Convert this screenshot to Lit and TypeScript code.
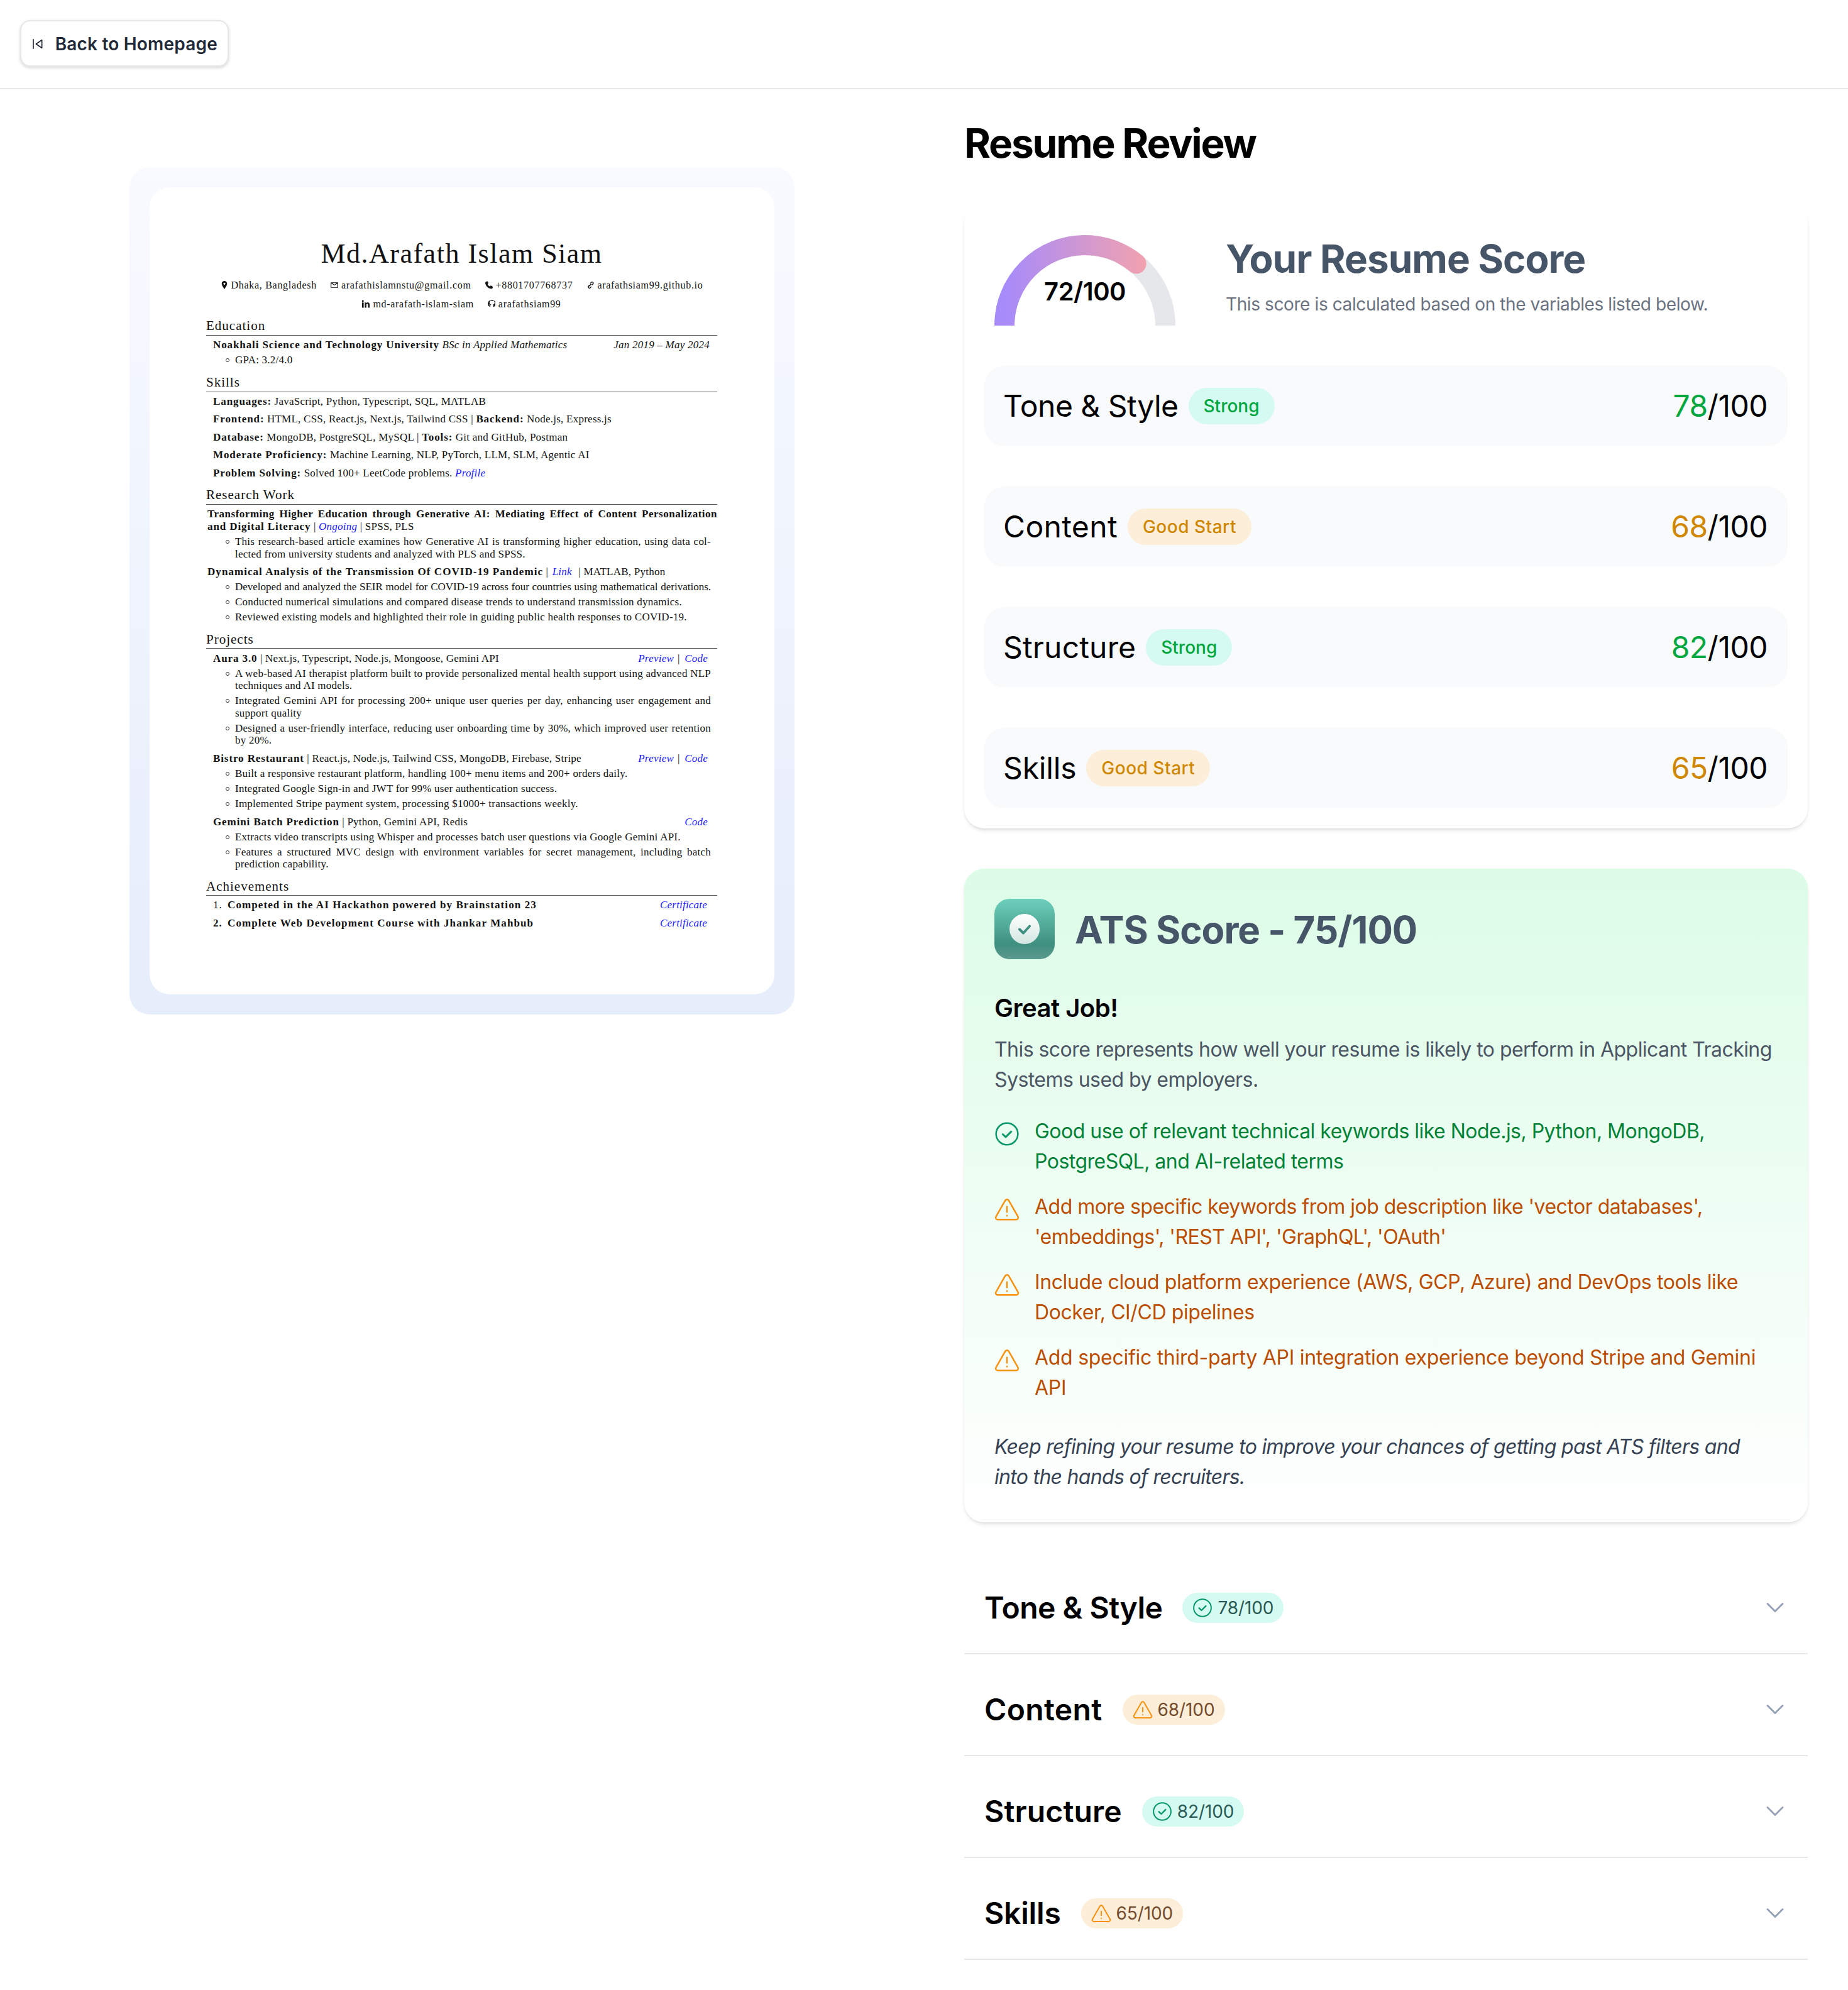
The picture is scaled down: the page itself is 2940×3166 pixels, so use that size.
import { LitElement, html, css, svg } from 'lit';
import { customElement } from 'lit/decorators.js';

const checkIcon = (size: number, color: string) => html`
  <svg width=${size} height=${size} viewBox="0 0 24 24" fill="none" stroke=${color} stroke-width="1.5" stroke-linecap="round" stroke-linejoin="round">
    <circle cx="12" cy="12" r="10.400"></circle>
    <path d="M8 12.300l2.800 2.700L16 9.800" stroke-width="1.8"></path>
  </svg>
`;

const warnIcon = (size: number, color: string) => html`
  <svg width=${size} height=${size} viewBox="0 0 24 24" fill="none" stroke=${color} stroke-width="1.5" stroke-linecap="round" stroke-linejoin="round">
    <path d="M10.300 3.500L1.500 19c-.7 1.300.2 2.800 1.700 2.800h17.600c1.500 0 2.400-1.500 1.700-2.800L13.700 3.500c-.8-1.300-2.600-1.300-3.400 0z"></path>
    <path d="M12 9.500v5"></path>
    <path d="M12 18v.1"></path>
  </svg>
`;

// track evens out the width difference of the substitute font per title
const scores = [
  { title: 'Tone & Style', score: 78, track: -0.5 },
  { title: 'Content', score: 68, track: 0.35 },
  { title: 'Structure', score: 82, track: 0.17 },
  { title: 'Skills', score: 65, track: -0.17 },
];

const tips = [
  { good: true, track: -0.52, text: 'Good use of relevant technical keywords like Node.js, Python, MongoDB, PostgreSQL, and AI-related terms' },
  { good: false, track: -0.52, text: "Add more specific keywords from job description like 'vector databases', 'embeddings', 'REST API', 'GraphQL', 'OAuth'" },
  { good: false, track: -0.4, text: 'Include cloud platform experience (AWS, GCP, Azure) and DevOps tools like Docker, CI/CD pipelines' },
  { good: false, track: -0.28, text: 'Add specific third-party API integration experience beyond Stripe and Gemini API' },
];

@customElement('resume-sheet')
export class ResumeSheet extends LitElement {
  static styles = css`
    :host {
      display: block;
      padding: 84.5px 91px 0 90px;
      height: 1284px;
      box-sizing: border-box;
      font-family: 'Liberation Serif', serif;
      font-size: 17px;
      line-height: 19.6px;
      letter-spacing: 0.24px;
      color: #111;
    }
    h1 {
      margin: 0;
      font-size: 44px;
      line-height: 42px;
      font-weight: 400;
      text-align: center;
      letter-spacing: 1.5px;
    }
    .contact {
      margin-top: 19.7px;
      display: flex;
      flex-wrap: wrap;
      justify-content: center;
      column-gap: 22px;
      row-gap: 5px;
      font-size: 16px;
      letter-spacing: 0.7px;
    }
    .contact span { display: inline-flex; align-items: center; gap: 5px; }
    .contact svg { width: 12px; height: 13px; fill: #111; }
    .break { flex-basis: 100%; height: 0; }
    h2 {
      margin: 0;
      font-size: 21px;
      line-height: 22px;
      font-weight: 400;
      letter-spacing: 1px;
      border-bottom: 1.5px solid #555;
      padding-bottom: 3.6px;
    }
    section { margin-top: 14px; }
    .entry { padding-left: 11px; padding-right: 12px; margin-top: 5.4px; display: flex; justify-content: space-between; }
    .entry.flat { padding-left: 2px; padding-right: 0; display: block; }
    .entry.flat.first { text-align-last: justify; }
    .entry.flat.first b { letter-spacing: 0.5px; }
    .entry.flat.next { margin-top: 0; }
    .entry.gap { margin-top: 9px; }
    .entry.flat.gap b { letter-spacing: 1.05px; }
    .entry.flat.gap a { margin: 0 6px 0 2px; }
    .entry a.solo, .links { margin-right: 3px; }
    .skills { padding-left: 11px; }
    .skills div { margin-top: 8.9px; }
    .skills div:first-child { margin-top: 5.4px; }
    ul { margin: 0; padding: 0 10px 0 46px; list-style: none; }
    li { margin-top: 4.4px; position: relative; }
    li::before {
      content: '';
      position: absolute;
      left: -15px;
      top: 7px;
      width: 6px;
      height: 6px;
      border: 1px solid #333;
      border-radius: 50%;
      box-sizing: border-box;
    }
    .full { display: block; text-align: justify; text-align-last: justify; }
    .full.tight { letter-spacing: 0; }
    b { font-weight: 700; letter-spacing: 0.9px; }
    a { color: #1a1aff; font-style: italic; text-decoration: none; }
    em { font-style: italic; }
    .links { white-space: nowrap; }
    .links a + a { margin-left: 3px; }
    .links a:first-child { margin-right: 6px; }
    ol { margin: 5px 0 0; padding: 0 16px 0 11px; list-style: none; font-weight: 700; letter-spacing: 1.1px; }
    ol li { display: flex; margin-top: 8.9px; }
    ol li::before { display: none; }
    ol li:first-child { margin-top: 0; }
    ol i { font-style: normal; width: 23px; flex: none; }
    ol i.light { font-weight: 400; }
    ol span { flex: 1; }
    ol a { font-weight: 400; letter-spacing: 0.2px; }
  `;

  render() {
    return html`
      <h1>Md.Arafath Islam Siam</h1>
      <div class="contact">
        <span><svg viewBox="0 0 12 14"><path d="M6 0a4.6 4.6 0 0 0-4.6 4.7C1.4 8 6 14 6 14s4.600-6 4.600-9.300A4.600 4.600 0 0 0 6 0zm0 6.400a1.700 1.700 0 1 1 0-3.400 1.700 1.700 0 0 1 0 3.400z"></path></svg>Dhaka, Bangladesh</span>
        <span><svg viewBox="0 0 14 14"><path d="M1 2h12a1 1 0 0 1 1 1v8a1 1 0 0 1-1 1H1a1 1 0 0 1-1-1V3a1 1 0 0 1 1-1zm.4 2v7h11.200V4L7 8 1.400 4zm1.400-.8L7 6.400l4.200-3.200H2.800z"></path></svg>arafathislamnstu@gmail.com</span>
        <span><svg viewBox="0 0 14 14"><path d="M3 0l2 .5.800 3.200L4.200 5.200c.7 1.700 2.400 3.500 4.200 4.400l1.600-1.600 3.200 1L14 12c-.5 1.300-1.600 2-3 2C5.400 13.500.500 8.600 0 3 0 1.600 1.500.400 3 0z"></path></svg>+8801707768737</span>
        <span><svg viewBox="0 0 14 14"><path d="M8.600 1.200a3 3 0 0 1 4.200 4.200L10.600 7.600 9.400 6.400l2.200-2.200a1.300 1.300 0 0 0-1.800-1.800L7.600 4.600 6.400 3.400zM5.400 6.400l1.200 1.200-2.200 2.200a1.300 1.300 0 0 0 1.800 1.800l2.200-2.200 1.200 1.200-2.200 2.200a3 3 0 0 1-4.200-4.200zM8.200 4.600l1.200 1.200-3.600 3.600-1.200-1.200z"></path></svg>arafathsiam99.github.io</span>
        <span class="break"></span>
        <span><svg viewBox="0 0 14 14"><path d="M0 4.500h3V14H0zM1.500 0a1.700 1.700 0 1 1 0 3.400 1.700 1.700 0 0 1 0-3.400zM5 4.500h2.800v1.300c.5-.9 1.600-1.500 2.900-1.500 2.500 0 3.300 1.500 3.300 4V14h-3V9c0-1.300-.3-2.200-1.500-2.200S8 7.700 8 9v5H5z"></path></svg>md-arafath-islam-siam</span>
        <span><svg viewBox="0 0 14 14"><path d="M7 0a6.500 6.500 0 0 0-2.200 12.700v-2.300c-.6 0-1.400-.2-1.800-1.300-.2-.5-.6-.9-1-1.200h1c.5 0 1 .5 1.300 1 .4.500 1 .6 1.500.4 0-.5.2-.9.500-1.200-1.900-.3-3-1.300-3-3.300 0-.9.300-1.600.8-2.200-.1-.6-.1-1.200.2-1.800.8 0 1.500.3 2.100.8a6 6 0 0 1 3.200 0c.6-.5 1.300-.8 2.100-.8.300.6.300 1.200.2 1.800.5.6.8 1.300.8 2.200 0 2-1.100 3-3 3.300.3.400.5.900.5 1.500v3.100A6.500 6.500 0 0 0 7 0z"></path></svg>arafathsiam99</span>
      </div>

      <section>
        <h2>Education</h2>
        <div class="entry"><span><b>Noakhali Science and Technology University</b> <em>BSc in Applied Mathematics</em></span><em>Jan 2019 – May 2024</em></div>
        <ul><li>GPA: 3.2/4.0</li></ul>
      </section>

      <section>
        <h2>Skills</h2>
        <div class="skills">
          <div><b>Languages:</b> JavaScript, Python, Typescript, SQL, MATLAB</div>
          <div><b>Frontend:</b> HTML, CSS, React.js, Next.js, Tailwind CSS | <b>Backend:</b> Node.js, Express.js</div>
          <div><b>Database:</b> MongoDB, PostgreSQL, MySQL | <b>Tools:</b> Git and GitHub, Postman</div>
          <div><b>Moderate Proficiency:</b> Machine Learning, NLP, PyTorch, LLM, SLM, Agentic AI</div>
          <div><b>Problem Solving:</b> Solved 100+ LeetCode problems. <a>Profile</a></div>
        </div>
      </section>

      <section>
        <h2>Research Work</h2>
        <div class="entry flat first"><b>Transforming Higher Education through Generative AI: Mediating Effect of Content Personalization</b></div>
        <div class="entry flat next"><b>and Digital Literacy</b> | <a>Ongoing</a> | SPSS, PLS</div>
        <ul>
          <li><span class="full">This research-based article examines how Generative AI is transforming higher education, using data col-</span>lected from university students and analyzed with PLS and SPSS.</li>
        </ul>
        <div class="entry flat gap"><b>Dynamical Analysis of the Transmission Of COVID-19 Pandemic</b> | <a>Link</a> | MATLAB, Python</div>
        <ul>
          <li><span class="full tight">Developed and analyzed the SEIR model for COVID-19 across four countries using mathematical derivations.</span></li>
          <li>Conducted numerical simulations and compared disease trends to understand transmission dynamics.</li>
          <li>Reviewed existing models and highlighted their role in guiding public health responses to COVID-19.</li>
        </ul>
      </section>

      <section>
        <h2>Projects</h2>
        <div class="entry"><span><b>Aura 3.0</b> | Next.js, Typescript, Node.js, Mongoose, Gemini API</span><span class="links"><a>Preview</a>| <a>Code</a></span></div>
        <ul>
          <li><span class="full">A web-based AI therapist platform built to provide personalized mental health support using advanced NLP</span>techniques and AI models.</li>
          <li><span class="full">Integrated Gemini API for processing 200+ unique user queries per day, enhancing user engagement and</span>support quality</li>
          <li><span class="full">Designed a user-friendly interface, reducing user onboarding time by 30%, which improved user retention</span>by 20%.</li>
        </ul>
        <div class="entry gap"><span><b>Bistro Restaurant</b> | React.js, Node.js, Tailwind CSS, MongoDB, Firebase, Stripe</span><span class="links"><a>Preview</a>| <a>Code</a></span></div>
        <ul>
          <li>Built a responsive restaurant platform, handling 100+ menu items and 200+ orders daily.</li>
          <li>Integrated Google Sign-in and JWT for 99% user authentication success.</li>
          <li>Implemented Stripe payment system, processing $1000+ transactions weekly.</li>
        </ul>
        <div class="entry gap"><span><b>Gemini Batch Prediction</b> | Python, Gemini API, Redis</span><a class="solo">Code</a></div>
        <ul>
          <li>Extracts video transcripts using Whisper and processes batch user questions via Google Gemini API.</li>
          <li><span class="full">Features a structured MVC design with environment variables for secret management, including batch</span>prediction capability.</li>
        </ul>
      </section>

      <section>
        <h2>Achievements</h2>
        <ol>
          <li><i class="light">1.</i><span>Competed in the AI Hackathon powered by Brainstation 23</span><a>Certificate</a></li>
          <li><i>2.</i><span>Complete Web Development Course with Jhankar Mahbub</span><a>Certificate</a></li>
        </ol>
      </section>
    `;
  }
}

@customElement('score-gauge')
export class ScoreGauge extends LitElement {
  static styles = css`
    :host { display: block; position: relative; width: 320px; height: 160px; flex: none; }
    svg { display: block; width: 320px; height: 160px; }
    .value {
      position: absolute;
      left: 0;
      right: 0;
      top: 78px;
      text-align: center;
      font-size: 40px;
      line-height: 56px;
      font-weight: 600;
      color: #000;
      letter-spacing: -0.5px;
    }
  `;

  render() {
    const arc = 'M10,50 A40,40 0 0,1 90,50';
    const len = Math.PI * 40;
    return html`
      <svg viewBox="0 0 100 50">
        ${svg`
          <defs>
            <linearGradient id="g" x1="0%" y1="0%" x2="100%" y2="0%">
              <stop offset="0%" stop-color="#a78bfa"></stop>
              <stop offset="100%" stop-color="#fca5a5"></stop>
            </linearGradient>
          </defs>
          <path d=${arc} fill="none" stroke="#e5e7eb" stroke-width="10" stroke-linecap="round"></path>
          <path d=${arc} fill="none" stroke="url(#g)" stroke-width="10" stroke-linecap="round"
            stroke-dasharray=${len} stroke-dashoffset=${len * (1 - 0.72)}></path>
        `}
      </svg>
      <div class="value">72/100</div>
    `;
  }
}

@customElement('app-root')
export class AppRoot extends LitElement {
  static styles = css`
    :host {
      display: block;
      background: #fff;
      min-height: 3166px;
      font-family: 'Inter', 'Noto Sans', sans-serif;
      color: #000;
    }
    * { box-sizing: border-box; }

    nav {
      height: 142px;
      border-bottom: 2px solid #e5e7eb;
      padding: 32px;
    }
    .back {
      display: inline-flex;
      align-items: center;
      gap: 20px;
      height: 74px;
      width: 332px;
      padding: 2px 16px 0 18px;
      background: #fff;
      border: 2px solid #e5e7eb;
      border-radius: 16px;
      box-shadow: 0 2px 5px rgba(0, 0, 0, 0.16);
      font-size: 28px;
      font-weight: 600;
      color: #1f2937;
      letter-spacing: 0.2px;
      white-space: nowrap;
    }

    main { display: grid; grid-template-columns: 1470px 1470px; }
    .left { display: flex; justify-content: center; padding-top: 124px; }
    .frame {
      width: 1058px;
      height: 1348px;
      padding: 32px;
      border-radius: 32px;
      background: linear-gradient(to bottom, #f8faff, #e6edfb);
    }
    .paper { background: #fff; border-radius: 32px; overflow: hidden; }

    .right { padding: 50px 64px 0; }
    h1.page {
      margin: 0 0 62px;
      font-size: 64px;
      line-height: 72px;
      font-weight: 700;
      letter-spacing: -2.2px;
    }

    .summary {
      background: #fff;
      border-radius: 32px;
      box-shadow: 0 4px 6px -1px rgba(0, 0, 0, 0.1), 0 2px 4px -2px rgba(0, 0, 0, 0.1);
      padding: 32px;
    }
    .summary-top { display: flex; align-items: center; gap: 64px; margin-bottom: 64px; }
    .summary-text { padding-top: 4px; }
    .summary-top h2 {
      margin: 0;
      font-size: 62px;
      line-height: 72px;
      font-weight: 700;
      color: #475569;
      letter-spacing: -1px;
    }
    .summary-top p {
      margin: 16px 0 0;
      font-size: 28px;
      line-height: 40px;
      color: #6b7280;
      letter-spacing: -0.4px;
    }
    .rows { display: flex; flex-direction: column; gap: 64px; }
    .row {
      height: 128px;
      border-radius: 32px;
      background: #f9fafb;
      padding: 0 32px 0 30px;
      display: flex;
      align-items: center;
      justify-content: space-between;
    }
    .row-left { display: flex; align-items: center; gap: 16px; }
    .row-title, .row-score { font-size: 48px; line-height: 64px; letter-spacing: -0.5px; }
    .pill {
      display: inline-flex;
      align-items: center;
      height: 58px;
      padding: 0 24px;
      border-radius: 32px;
      font-size: 28px;
      font-weight: 500;
      letter-spacing: 0;
    }
    .good { background: #d5faf1; color: #00a63e; }
    .warn { background: #fceed8; color: #d08700; letter-spacing: 0.5px; }
    .num-good { color: #00a63e; }
    .num-warn { color: #d08700; }

    .ats {
      margin-top: 64px;
      height: 1040px;
      padding: 48px;
      border-radius: 32px;
      background: linear-gradient(to bottom, #dcfce7, #fff);
      box-shadow: 0 4px 6px -1px rgba(0, 0, 0, 0.1), 0 2px 4px -2px rgba(0, 0, 0, 0.1);
    }
    .ats-head { display: flex; align-items: center; gap: 32px; margin-bottom: 50px; }
    .ats-icon { width: 96px; height: 96px; flex: none; display: block; }
    .ats-head h2 {
      margin: 0;
      padding-top: 2px;
      font-size: 60px;
      line-height: 72px;
      font-weight: 700;
      color: #475569;
      letter-spacing: -1px;
    }
    .ats h3 { margin: 0 0 14px; font-size: 40px; line-height: 56px; font-weight: 600; letter-spacing: -0.5px; }
    .ats p { margin: 0; font-size: 32px; line-height: 48px; color: #4b5563; letter-spacing: -0.55px; }
    .tips { list-style: none; margin: 34px 0 46px; padding: 0; display: flex; flex-direction: column; gap: 24px; }
    .tips li { display: flex; gap: 24px; font-size: 32px; line-height: 48px; }
    .tips svg { flex: none; margin-top: 8px; }
    .tips .ok { color: #008236; }
    .tips .no { color: #bb4d00; }
    .ats p.note { font-style: italic; color: #364153; letter-spacing: -0.7px; }

    .accordion { margin-top: 48px; }
    .acc {
      height: 162px;
      padding: 16px 36px 0 32px;
      border-bottom: 2px solid #e5e7eb;
      display: flex;
      align-items: center;
      justify-content: space-between;
    }
    .acc-left { display: flex; align-items: center; gap: 32px; }
    .acc-title { font-size: 48px; line-height: 64px; font-weight: 600; letter-spacing: -0.5px; }
    .chip {
      display: inline-flex;
      align-items: center;
      gap: 8px;
      height: 48px;
      padding: 0 16px;
      border-radius: 32px;
      font-size: 28px;
      letter-spacing: -0.1px;
    }
    .chip.c-good { background: #d5faf1; color: #2a5a55; }
    .chip.c-warn { background: #fceed8; color: #734b2c; }
  `;

  render() {
    return html`
      <nav>
        <div class="back">
          <svg width="16" height="16" viewBox="0 0 16 16" fill="none" stroke="#111827" stroke-width="1.600" stroke-linejoin="round">
            <path d="M1 0v16"></path>
            <path d="M15 1.500v13L5.500 8z"></path>
          </svg>
          <span>Back to Homepage</span>
        </div>
      </nav>
      <main>
        <div class="left">
          <div class="frame">
            <div class="paper"><resume-sheet></resume-sheet></div>
          </div>
        </div>
        <div class="right">
          <h1 class="page">Resume Review</h1>

          <div class="summary">
            <div class="summary-top">
              <score-gauge></score-gauge>
              <div class="summary-text">
                <h2>Your Resume Score</h2>
                <p>This score is calculated based on the variables listed below.</p>
              </div>
            </div>
            <div class="rows">
              ${scores.map(s => {
                const good = s.score > 69;
                return html`
                  <div class="row">
                    <div class="row-left">
                      <span class="row-title" style="letter-spacing:${s.track}px">${s.title}</span>
                      <span class="pill ${good ? 'good' : 'warn'}">${good ? 'Strong' : 'Good Start'}</span>
                    </div>
                    <div class="row-score"><span class=${good ? 'num-good' : 'num-warn'}>${s.score}</span>/100</div>
                  </div>
                `;
              })}
            </div>
          </div>

          <div class="ats">
            <div class="ats-head">
              <svg class="ats-icon" viewBox="0 0 96 96">
                <defs>
                  <linearGradient id="tile" x1="0" y1="0" x2="0" y2="1">
                    <stop offset="0" stop-color="#6dd0bc"></stop>
                    <stop offset="0.75" stop-color="#3f8f80"></stop>
                    <stop offset="1" stop-color="#5c9a8e"></stop>
                  </linearGradient>
                  <linearGradient id="disc" x1="0" y1="0" x2="0" y2="1">
                    <stop offset="0" stop-color="#ffffff"></stop>
                    <stop offset="1" stop-color="#d3e6e1"></stop>
                  </linearGradient>
                </defs>
                <rect width="96" height="96" rx="24" fill="url(#tile)"></rect>
                <circle cx="48" cy="48" r="24" fill="url(#disc)"></circle>
                <path d="M40 48.500l6 6 10-11" fill="none" stroke="#3f8f80" stroke-width="4" stroke-linecap="round" stroke-linejoin="round"></path>
              </svg>
              <h2>ATS Score - 75/100</h2>
            </div>
            <h3>Great Job!</h3>
            <p>This score represents how well your resume is likely to perform in Applicant Tracking Systems used by employers.</p>
            <ul class="tips">
              ${tips.map(t => html`
                <li class=${t.good ? 'ok' : 'no'} style="letter-spacing:${t.track}px">
                  ${t.good ? checkIcon(40, '#059669') : warnIcon(40, '#f9900a')}
                  <span>${t.text}</span>
                </li>
              `)}
            </ul>
            <p class="note">Keep refining your resume to improve your chances of getting past ATS filters and into the hands of recruiters.</p>
          </div>

          <div class="accordion">
            ${scores.map(s => {
              const good = s.score > 69;
              return html`
                <div class="acc">
                  <div class="acc-left">
                    <span class="acc-title" style="letter-spacing:${s.track}px">${s.title}</span>
                    <span class="chip ${good ? 'c-good' : 'c-warn'}">
                      ${good ? checkIcon(32, '#059669') : warnIcon(32, '#f9900a')}
                      ${s.score}/100
                    </span>
                  </div>
                  <svg width="32" height="32" viewBox="0 0 32 32" fill="none" stroke="#98a3b8" stroke-width="3" stroke-linecap="round" stroke-linejoin="round">
                    <path d="M4 9.500l12 12 12-12"></path>
                  </svg>
                </div>
              `;
            })}
          </div>
        </div>
      </main>
    `;
  }
}
